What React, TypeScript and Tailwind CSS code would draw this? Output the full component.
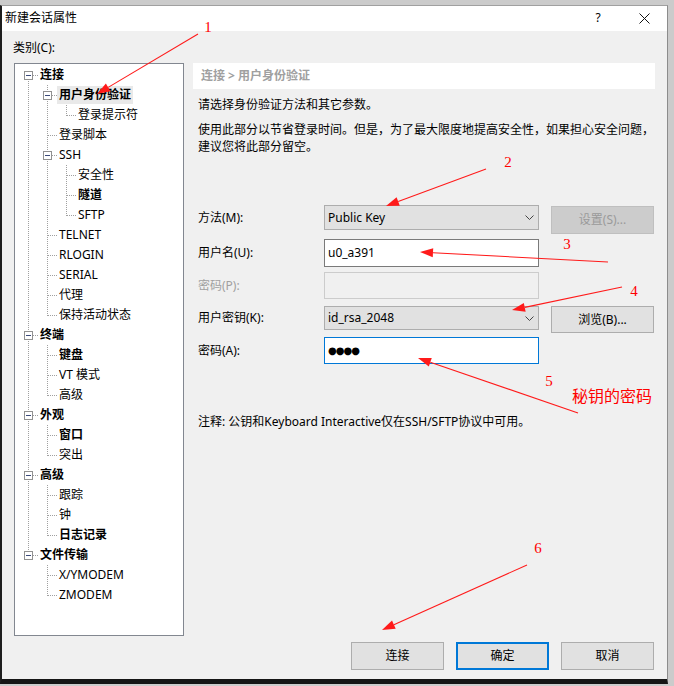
import React from 'react';

type TreeNode = { label: string; bold?: boolean; selected?: boolean; children?: TreeNode[] };

const tree: TreeNode[] = [
  {
    label: '连接',
    bold: true,
    children: [
      { label: '用户身份验证', bold: true, selected: true, children: [{ label: '登录提示符' }] },
      { label: '登录脚本' },
      { label: 'SSH', children: [{ label: '安全性' }, { label: '隧道', bold: true }, { label: 'SFTP' }] },
      { label: 'TELNET' },
      { label: 'RLOGIN' },
      { label: 'SERIAL' },
      { label: '代理' },
      { label: '保持活动状态' },
    ],
  },
  { label: '终端', bold: true, children: [{ label: '键盘', bold: true }, { label: 'VT 模式' }, { label: '高级' }] },
  { label: '外观', bold: true, children: [{ label: '窗口', bold: true }, { label: '突出' }] },
  { label: '高级', bold: true, children: [{ label: '跟踪' }, { label: '钟' }, { label: '日志记录', bold: true }] },
  { label: '文件传输', bold: true, children: [{ label: 'X/YMODEM' }, { label: 'ZMODEM' }] },
];

type Row = { node: TreeNode; level: number; rails: boolean[]; last: boolean; first: boolean };

function flatten(nodes: TreeNode[], level = 0, rails: boolean[] = [], out: Row[] = []) {
  nodes.forEach((node, i) => {
    const last = i === nodes.length - 1;
    out.push({ node, level, rails, last, first: level === 0 && i === 0 });
    if (node.children) flatten(node.children, level + 1, [...rails, !last], out);
  });
  return out;
}

const LINE = '#a0a0a0';

function RailCol({ on }: { on: boolean }) {
  return (
    <svg width="19" height="20" className="shrink-0" shapeRendering="crispEdges">
      {on && <line x1="9.5" y1="0" x2="9.5" y2="20" stroke={LINE} strokeDasharray="1 1" />}
    </svg>
  );
}

function ConnCol({ row }: { row: Row }) {
  const hasKids = !!row.node.children;
  return (
    <svg width="19" height="20" className="shrink-0" shapeRendering="crispEdges">
      <line x1="9.5" y1={row.first ? 10 : 0} x2="9.5" y2={row.last ? 11 : 20} stroke={LINE} strokeDasharray="1 1" />
      <line x1="10" y1="10.5" x2="19" y2="10.5" stroke={LINE} strokeDasharray="1 1" />
      {hasKids && (
        <g>
          <rect x="5.5" y="6.5" width="8" height="8" fill="#fff" stroke="#919191" />
          <line x1="7" y1="10.5" x2="12" y2="10.5" stroke="#3b4a7a" />
        </g>
      )}
    </svg>
  );
}

function Tree() {
  const rows = flatten(tree);
  return (
    <div className="w-[170px] h-[573px] shrink-0 bg-white border border-[#828790] pl-[4px] pt-px">
      {rows.map((r, i) => (
        <div key={i} className="flex items-center h-5">
          {r.rails.map((on, j) => (
            <RailCol key={j} on={on} />
          ))}
          <ConnCol row={r} />
          <span
            className={`px-[2px] h-[18px] leading-[18px] whitespace-nowrap ${r.node.bold ? 'font-bold' : ''} ${
              r.node.selected ? 'bg-[#e9e9e9]' : ''
            }`}
          >
            {r.node.label}
          </span>
        </div>
      ))}
    </div>
  );
}

function Chevron() {
  return (
    <svg width="9" height="5" viewBox="0 0 9 5" className="ml-auto mr-[4px]">
      <path d="M0.5 0.5 L4.5 4.5 L8.5 0.5" fill="none" stroke="#444" strokeWidth="1" />
    </svg>
  );
}

function Arrow({ x1, y1, x2, y2 }: { x1: number; y1: number; x2: number; y2: number }) {
  const a = Math.atan2(y2 - y1, x2 - x1);
  const L = 13;
  const W = 4.5;
  const bx = x2 - L * Math.cos(a);
  const by = y2 - L * Math.sin(a);
  const px = -Math.sin(a) * W;
  const py = Math.cos(a) * W;
  return (
    <g>
      <line x1={x1} y1={y1} x2={bx} y2={by} stroke="#ff1a1a" strokeWidth="1.1" />
      <polygon points={`${x2},${y2} ${bx + px},${by + py} ${bx - px},${by - py}`} fill="#ff1a1a" />
    </g>
  );
}

const marks = [
  { n: '1', x: 208, y: 27 },
  { n: '2', x: 508, y: 162 },
  { n: '3', x: 567, y: 244 },
  { n: '4', x: 634, y: 291 },
  { n: '5', x: 549, y: 381 },
  { n: '6', x: 538, y: 548 },
];

export default function App() {
  return (
    <div className="relative w-[674px] h-[686px] overflow-hidden bg-[#cbcbcb] text-[12px] leading-[16px] text-black font-['Noto_Sans','Noto_Sans_CJK_SC',sans-serif]">
      <div className="mt-[5px] w-[668px] h-[679px] flex flex-col border-t border-t-[#a0a0a0] border-l-2 border-l-[#1e1e1e] border-r border-r-[#8c8c8c] border-b-[5px] border-b-[#151515]">
        {/* title bar */}
        <div className="h-[25px] bg-white flex items-center shrink-0">
          <span className="pl-[3px] pb-[2px]">新建会话属性</span>
          <span className="ml-auto w-[46px] text-center pb-[2px]">?</span>
          <span className="w-[46px] flex justify-center">
            <svg width="11" height="11" viewBox="0 0 11 11">
              <path d="M0.5 0.5 L10.5 10.5 M10.5 0.5 L0.5 10.5" stroke="#111" strokeWidth="1" />
            </svg>
          </span>
        </div>

        {/* body */}
        <div className="flex-1 bg-[#f0f0f0] flex flex-col pl-[12px] pr-[12px] pt-[9px]">
          <div className="h-4 -ml-px">类别(C):</div>
          <div className="flex gap-[9px] mt-[7px]">
            <Tree />
            <div className="w-[462px] flex flex-col">
              <div className="h-[26px] bg-white flex items-center pl-[8px] text-[#a0a0a0] font-bold">连接 &gt; 用户身份验证</div>
              <div className="pl-[5px]">
                <p className="mt-[8px]">请选择身份验证方法和其它参数。</p>
                <p className="mt-[8px] leading-[17px] whitespace-nowrap">
                  使用此部分以节省登录时间。但是，为了最大限度地提高安全性，如果担心安全问题，
                  <br />
                  建议您将此部分留空。
                </p>

                <div className="mt-[50px] flex items-start">
                  <div className="w-[126px] h-[25px] flex items-center">方法(M):</div>
                  <div className="w-[215px] h-[25px] flex items-center border border-[#adadad] bg-[#e1e1e1] pl-[3px]">
                    Public Key
                    <Chevron />
                  </div>
                  <button className="ml-[12px] mt-px w-[103px] h-[28px] shrink-0 border border-[#bfbfbf] bg-[#cccccc] text-[#9a9a9a]">设置(S)...</button>
                </div>

                <div className="mt-[5px] flex items-start">
                  <div className="w-[126px] h-[28px] flex items-center">用户名(U):</div>
                  <div className="w-[215px] h-[28px] flex items-center border border-[#7a7a7a] bg-white pl-[3px]">u0_a391</div>
                </div>

                <div className="mt-[5px] flex items-start">
                  <div className="w-[126px] h-[27px] flex items-center text-[#a0a0a0]">密码(P):</div>
                  <div className="w-[215px] h-[27px] border border-[#cccccc] bg-[#f0f0f0]" />
                </div>

                <div className="mt-[7px] flex items-start">
                  <div className="w-[126px] h-[24px] flex items-center">用户密钥(K):</div>
                  <div className="w-[215px] h-[24px] flex items-center border border-[#adadad] bg-[#e1e1e1] pl-[3px]">
                    id_rsa_2048
                    <Chevron />
                  </div>
                  <button className="ml-[12px] w-[103px] h-[27px] shrink-0 border border-[#adadad] bg-[#e1e1e1]">浏览(B)...</button>
                </div>

                <div className="mt-[4px] flex items-start">
                  <div className="w-[126px] h-[27px] flex items-center">密码(A):</div>
                  <div className="w-[215px] h-[27px] flex items-center border border-[#0078d7] bg-white pl-[3px] font-['DejaVu_Sans',sans-serif] text-[10px] tracking-[-1px]">
                    ●●●●
                  </div>
                </div>

                <p className="mt-[50px]">注释: 公钥和Keyboard Interactive仅在SSH/SFTP协议中可用。</p>
              </div>
            </div>
          </div>

          <div className="mt-[6px] mr-px flex justify-end gap-[12px]">
            <button className="w-[93px] h-[28px] border border-[#adadad] bg-[#e1e1e1]">连接</button>
            <button className="w-[93px] h-[28px] border-2 border-[#0078d7] bg-[#e1e1e1]">确定</button>
            <button className="w-[93px] h-[28px] border border-[#adadad] bg-[#e1e1e1]">取消</button>
          </div>
        </div>
      </div>

      {/* red annotations */}
      <svg className="absolute inset-0 pointer-events-none" width="674" height="686">
        <Arrow x1={198} y1={34} x2={97} y2={94} />
        <Arrow x1={486} y1={169} x2={386} y2={206} />
        <Arrow x1={608} y1={262} x2={420} y2={252} />
        <Arrow x1={622} y1={287} x2={512} y2={310} />
        <Arrow x1={578} y1={413} x2={418} y2={358} />
        <Arrow x1={527} y1={565} x2={382} y2={630} />
      </svg>
      {marks.map((m) => (
        <span
          key={m.n}
          className="absolute pointer-events-none text-[#ff0000] text-[15px] leading-[16px] font-['Liberation_Serif',serif] -translate-x-1/2 -translate-y-1/2"
          style={{ left: m.x, top: m.y }}
        >
          {m.n}
        </span>
      ))}
      <span className="absolute left-[572px] top-[385px] text-[#ff0000] text-[16px] leading-[20px] font-['Noto_Sans_CJK_SC',sans-serif]">
        秘钥的密码
      </span>
    </div>
  );
}
